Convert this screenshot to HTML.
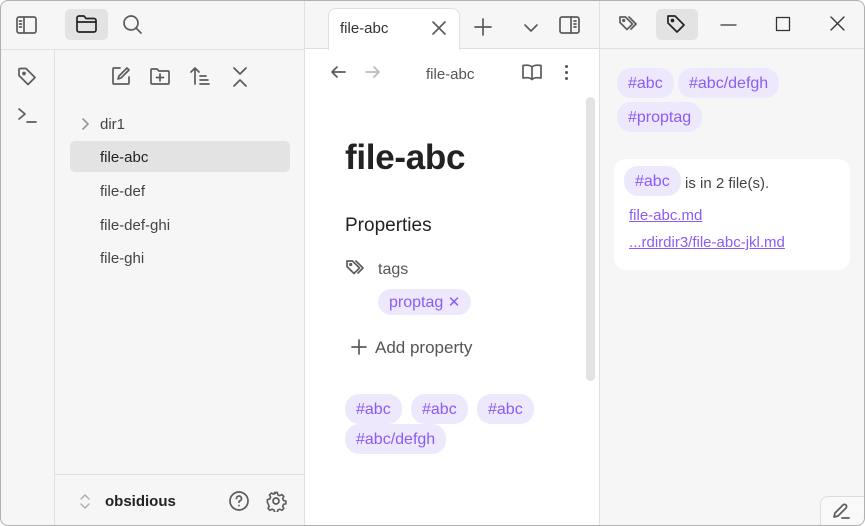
<!DOCTYPE html>
<html><head><meta charset="utf-8"><style>
*{box-sizing:border-box;margin:0;padding:0}
html,body{width:865px;height:526px;overflow:hidden;background:#fff}
body{font-family:"Liberation Sans",sans-serif;color:#222;position:relative}
.a{position:absolute}
svg{position:absolute;fill:none;stroke:#5c5c5c;stroke-width:1.7;stroke-linecap:round;stroke-linejoin:round}
.tag{position:absolute;background:#eee8fd;color:#8a5cf5;border-radius:14px;font-size:16px;height:30px;line-height:32px;padding:0 11px}
.t{position:absolute;font-size:15px;color:#444}
</style></head><body>
<div class="a" style="left:0;top:0;width:865px;height:526px;border-radius:8px;overflow:hidden;background:#f6f6f6">
<div class="a" style="left:54px;top:49px;width:1px;height:477px;background:#e0e0e0"></div>
<div class="a" style="left:0;top:49px;width:305px;height:1px;background:#e0e0e0"></div>
<div class="a" style="left:304px;top:0;width:1px;height:526px;background:#e0e0e0"></div>
<div class="a" style="left:305px;top:0;width:295px;height:526px;background:#fff"></div>
<div class="a" style="left:305px;top:0;width:295px;height:49px;background:#f6f6f6"></div>
<div class="a" style="left:305px;top:48px;width:560px;height:1px;background:#e0e0e0"></div>
<div class="a" style="left:599px;top:0;width:1px;height:526px;background:#e0e0e0"></div>
<div class="a" style="left:328px;top:8px;width:132px;height:42px;background:#fff;border:1px solid #e0e0e0;border-bottom:none;border-radius:8px 8px 0 0"></div>
<div class="t" style="left:340px;top:20px;color:#333">file-abc</div>
<svg style="left:430px;top:19px" width="18" height="18"><path d="M3 3L15 15M15 3L3 15"/></svg>
<svg style="left:473px;top:17px" width="20" height="20"><path d="M10 2V18M2 10H18"/></svg>
<svg style="left:522px;top:19px" width="18" height="18"><path d="M3 6L9 12L15 6"/></svg>
<svg style="left:558px;top:15px" width="24" height="20"><rect x="2" y="2" width="19" height="16" rx="2"/><path d="M13 2V18M16 6H18M16 9H18M16 12H18"/></svg>
<svg style="left:15px;top:15px" width="24" height="20"><rect x="2" y="2" width="19" height="16" rx="2"/><path d="M9 2V18M4.5 6H6.5M4.5 9H6.5M4.5 12H6.5"/></svg>
<div class="a" style="left:65px;top:9px;width:43px;height:31px;background:#e3e3e3;border-radius:5px"></div>
<svg style="left:75px;top:13px;stroke:#222" width="24" height="22"><path d="M2 5a2 2 0 0 1 2-2h5l2 2.5h8a2 2 0 0 1 2 2V17a2 2 0 0 1-2 2H4a2 2 0 0 1-2-2ZM2 9H21"/></svg>
<svg style="left:121px;top:13px" width="24" height="24"><circle cx="10" cy="10" r="7"/><path d="M15 15L20 20"/></svg>
<svg style="left:16px;top:65px" width="24" height="24"><path d="M3 4v6.5l9 9 7-7-9-9H4z"/><circle cx="8" cy="8.5" r="1" fill="#5c5c5c"/></svg>
<svg style="left:16px;top:106px" width="24" height="20"><path d="M3 3L9 8L3 13M11 16H20"/></svg>
<svg style="left:110px;top:65px" width="22" height="22"><path d="M10 3H4a1 1 0 0 0-1 1v14a1 1 0 0 0 1 1h14a1 1 0 0 0 1-1v-6M17 3l2 2-8 8-3 1 1-3z"/></svg>
<svg style="left:149px;top:65px" width="24" height="22"><path d="M2 5a1 1 0 0 1 1-1h5l2 2h9a1 1 0 0 1 1 1v11a1 1 0 0 1-1 1H3a1 1 0 0 1-1-1ZM11 9v7M7.5 12.5H14.5"/></svg>
<svg style="left:189px;top:64px" width="24" height="24"><path d="M6 20V4M2 8l4-4 4 4M11 12h6M11 16h8M11 20h9"/></svg>
<svg style="left:229px;top:66px" width="22" height="22"><path d="M5 2L11 8L17 2M5 20L11 14L17 20"/></svg>
<svg style="left:78px;top:116px;stroke:#999" width="14" height="16"><path d="M5 3L10 8L5 13"/></svg>
<div class="t" style="left:100px;top:116px">dir1</div>
<div class="a" style="left:70px;top:141px;width:220px;height:31px;background:#e3e3e3;border-radius:5px"></div>
<div class="t" style="left:100px;top:149px;color:#222">file-abc</div>
<div class="t" style="left:100px;top:183px">file-def</div>
<div class="t" style="left:100px;top:217px">file-def-ghi</div>
<div class="t" style="left:100px;top:250px">file-ghi</div>
<div class="a" style="left:55px;top:474px;width:250px;height:1px;background:#e0e0e0"></div>
<svg style="left:78px;top:492px;stroke:#aaa;stroke-width:1.3" width="14" height="20"><path d="M3 7L7 3L11 7M3 12L7 16L11 12"/></svg>
<div class="a" style="left:105px;top:493px;font-size:15px;font-weight:bold;color:#222">obsidious</div>
<svg style="left:228px;top:490px" width="22" height="22"><circle cx="11" cy="11" r="9"/><path d="M8.5 8.5a2.5 2.5 0 1 1 3.5 2.3c-.7.3-1 .8-1 1.5M11 15.5v.1"/></svg>
<svg style="left:265px;top:490px" width="22" height="22"><circle cx="11" cy="11" r="3"/><path d="M9.5 2h3l.5 2.5 2 1 2.3-1.2 2 2-1.2 2.3.9 2 2.5.5v3l-2.5.5-.9 2 1.2 2.3-2 2-2.3-1.2-2 .9-.5 2.5h-3l-.5-2.5-2-.9-2.3 1.2-2-2 1.2-2.3-.9-2L2 12.5v-3l2.5-.5.9-2-1.2-2.3 2-2 2.3 1.2 2-1z" transform="scale(.95) translate(.5 .5)"/></svg>
<svg style="left:329px;top:63px" width="20" height="18"><path d="M16 9H3M8 4L3 9L8 14"/></svg>
<svg style="left:363px;top:63px;stroke:#bbb" width="20" height="18"><path d="M3 9H16M11 4L16 9L11 14"/></svg>
<div class="t" style="left:426px;top:66px;color:#555">file-abc</div>
<svg style="left:521px;top:62px" width="22" height="20"><path d="M11 5C9 3 5 3 2 3.5V16c3-.5 7-.5 9 1.5 2-2 6-2 9-1.5V3.5C17 3 13 3 11 5ZM11 5V17"/></svg>
<div class="a" style="left:565px;top:65px;width:3px;height:3px;border-radius:2px;background:#555;box-shadow:0 6px 0 #555,0 12px 0 #555"></div>
<div class="a" style="left:586px;top:97px;width:9px;height:284px;background:#e3e3e3;border-radius:5px"></div>
<div class="a" style="left:345px;top:138px;font-size:35px;font-weight:bold;color:#222;letter-spacing:-.3px">file-abc</div>
<div class="a" style="left:345px;top:215px;font-size:19px;color:#222">Properties</div>
<svg style="left:345px;top:258px" width="24" height="20"><path d="M2 3v5.5l7 7 5.5-5.5-7-7zM11 3l7 7-5 5"/><circle cx="5.7" cy="6.5" r=".8" fill="#5c5c5c"/></svg>
<div class="a" style="left:378px;top:261px;font-size:16px;color:#555">tags</div>
<div class="tag" style="left:378px;top:289px;height:26px;line-height:27px;padding:0 11px;font-size:16px">proptag <span style="font-size:15px">✕</span></div>
<svg style="left:350px;top:338px" width="18" height="18"><path d="M9 2V16M2 9H16"/></svg>
<div class="a" style="left:375px;top:338px;font-size:17px;color:#555">Add property</div>
<div class="tag" style="left:345px;top:394px">#abc</div>
<div class="tag" style="left:411px;top:394px">#abc</div>
<div class="tag" style="left:477px;top:394px">#abc</div>
<div class="tag" style="left:345px;top:424px">#abc/defgh</div>
<svg style="left:618px;top:14px" width="26" height="22"><path d="M2 3v5.5l7 7 5.5-5.5-7-7zM11 3l7 7-5 5"/><circle cx="5.7" cy="6.5" r=".8" fill="#5c5c5c"/></svg>
<div class="a" style="left:656px;top:9px;width:42px;height:31px;background:#e3e3e3;border-radius:5px"></div>
<svg style="left:665px;top:13px;stroke:#222" width="24" height="24"><path d="M3 3v7l9 9 7-7-9-9z"/><circle cx="7.5" cy="7.5" r="1" fill="#222"/></svg>
<svg style="left:719px;top:15px;stroke:#333;stroke-width:1.3" width="20" height="20"><path d="M2 10H17"/></svg>
<svg style="left:774px;top:15px;stroke:#333;stroke-width:1.3" width="20" height="20"><rect x="2.5" y="2.5" width="13" height="13"/></svg>
<svg style="left:829px;top:15px;stroke:#333;stroke-width:1.3" width="20" height="20"><path d="M2 2L15 15M15 2L2 15"/></svg>
<div class="tag" style="left:617px;top:68px">#abc</div>
<div class="tag" style="left:678px;top:68px">#abc/defgh</div>
<div class="tag" style="left:617px;top:102px">#proptag</div>
<div class="a" style="left:614px;top:159px;width:236px;height:111px;background:#fff;border-radius:12px"></div>
<div class="tag" style="left:624px;top:166px">#abc</div>
<div class="a" style="left:685px;top:175px;font-size:15px;color:#444">is in 2 file(s).</div>
<div class="a" style="left:629px;top:207px;font-size:15px;color:#8a5cf5;text-decoration:underline">file-abc.md</div>
<div class="a" style="left:629px;top:234px;font-size:15px;color:#8a5cf5;text-decoration:underline">...rdirdir3/file-abc-jkl.md</div>
<div class="a" style="left:820px;top:496px;width:45px;height:32px;background:#f9f9f9;border:1px solid #ddd;border-radius:8px 0 0 0"></div>
<svg style="left:830px;top:500px" width="22" height="22"><path d="M4 17l1-4 8-8a2 2 0 0 1 3 3l-8 8zM12 18H19"/></svg>
</div>
<div class="a" style="left:0;top:0;width:865px;height:526px;border:1px solid #b0b0b0;border-radius:8px"></div>
</body></html>
